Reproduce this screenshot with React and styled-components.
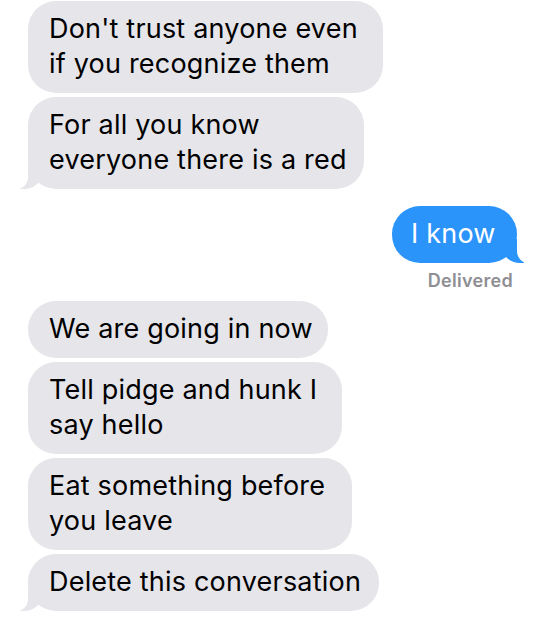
import React from 'react';
import styled, { createGlobalStyle, css } from 'styled-components';

const GlobalStyle = createGlobalStyle`
    html, body {
        margin: 0;
        padding: 0;
        background: #ffffff;
    }
    body {
        font-family: Inter, "Liberation Sans", Arial, sans-serif;
        -webkit-font-smoothing: antialiased;
    }
`;

const Thread = styled.div`
    width: 540px;
    height: 629px;
    box-sizing: border-box;
    padding: 1px 23px 0 28px;
    display: flex;
    flex-direction: column;
    overflow: hidden;
`;

const Group = styled.div`
    display: flex;
    flex-direction: column;
    align-items: ${p => (p.$sent ? 'flex-end' : 'flex-start')};
    gap: 4px;
    margin-top: ${p => p.$top || 0}px;
`;

const tailLeft = css`
    &::before {
        content: '';
        position: absolute;
        bottom: 0;
        left: -8px;
        width: 22px;
        height: 24px;
        background: #e5e5ea;
        border-bottom-right-radius: 18px 16px;
    }
    &::after {
        content: '';
        position: absolute;
        bottom: 0;
        left: -12px;
        width: 12px;
        height: 26px;
        background: #ffffff;
        border-bottom-right-radius: 11px 12px;
    }
`;

const tailRight = css`
    &::before {
        content: '';
        position: absolute;
        bottom: 0;
        right: -7px;
        width: 22px;
        height: 24px;
        background: #2b94fa;
        border-bottom-left-radius: 18px 16px;
    }
    &::after {
        content: '';
        position: absolute;
        bottom: 0;
        right: -11px;
        width: 11px;
        height: 26px;
        background: #ffffff;
        border-bottom-left-radius: 11px 12px;
    }
`;

const Bubble = styled.div`
    position: relative;
    box-sizing: border-box;
    width: ${p => p.$w}px;
    padding: 10px 12px 12px ${p => (p.$sent ? 19 : 21)}px;
    border-radius: 28px;
    background: ${p => (p.$sent ? '#2b94fa' : '#e5e5ea')};
    color: ${p => (p.$sent ? '#ffffff' : '#000000')};
    font-size: 27px;
    line-height: 35px;
    letter-spacing: 0.2px;
    white-space: nowrap;
    ${p => p.$tail && (p.$sent ? tailRight : tailLeft)}
`;

const Status = styled.div`
    margin: 4px 4px 0 0;
    font-size: 18px;
    line-height: 20px;
    font-weight: 600;
    letter-spacing: 0.3px;
    color: #8e8e93;
`;

const Message = ({ lines, ...rest }) => (
    <Bubble {...rest}>
        {lines.map((l, i) => (
            <React.Fragment key={i}>
                {i > 0 && <br />}
                {l}
            </React.Fragment>
        ))}
    </Bubble>
);

const App = () => {
    return (
        <>
            <GlobalStyle />
            <Thread>
                <Group>
                    <Message $w={355} lines={["Don't trust anyone even", 'if you recognize them']} />
                    <Message $w={336} $tail lines={['For all you know', 'everyone there is a red']} />
                </Group>

                <Group $sent $top={17}>
                    <Message $sent $tail $w={125} lines={['I know']} />
                    <Status>Delivered</Status>
                </Group>

                <Group $top={10}>
                    <Message $w={300} lines={['We are going in now']} />
                    <Message $w={314} lines={['Tell pidge and hunk I', 'say hello']} />
                    <Message $w={324} lines={['Eat something before', 'you leave']} />
                    <Message $w={351} $tail lines={['Delete this conversation']} />
                </Group>
            </Thread>
        </>
    );
};

export default App;
